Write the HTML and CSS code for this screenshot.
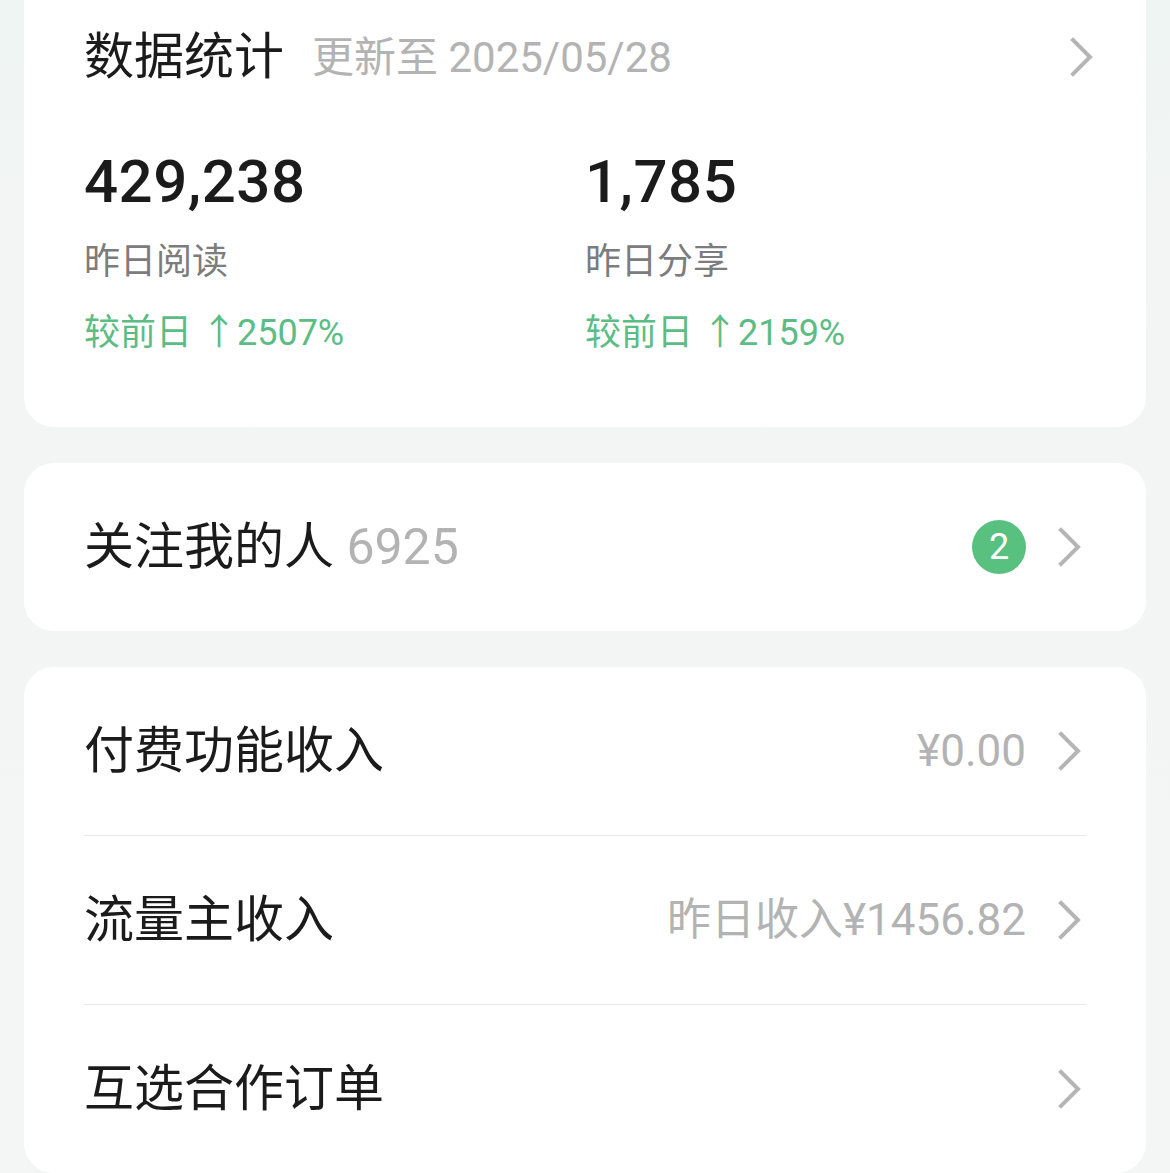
FILE: index.html
```html
<!DOCTYPE html>
<html lang="zh-CN">
<head>
<meta charset="utf-8">
<title>数据统计</title>
<link rel="stylesheet" href="styles.css">
</head>
<body>
<main class="page">
  <section class="card stats-card">
    <div class="stats-head">
      <div class="stats-title">
        <span class="title">数据统计</span>
        <span class="updated">更新至 2025/05/28</span>
      </div>
      <svg class="chev chev-head" viewBox="0 0 24 40" aria-hidden="true"><path d="M3 3 L20 20 L3 37"/></svg>
    </div>
    <div class="stats-grid">
      <div class="stat">
        <div class="stat-value">429,238</div>
        <div class="stat-label">昨日阅读</div>
        <div class="stat-delta">较前日 ↑2507%</div>
      </div>
      <div class="stat">
        <div class="stat-value">1,785</div>
        <div class="stat-label">昨日分享</div>
        <div class="stat-delta">较前日 ↑2159%</div>
      </div>
    </div>
  </section>

  <section class="card list-card">
    <div class="row">
      <div class="row-title">关注我的人 <span class="count">6925</span></div>
      <div class="row-right">
        <span class="badge">2</span>
        <svg class="chev" viewBox="0 0 24 40" aria-hidden="true"><path d="M3 3 L20 20 L3 37"/></svg>
      </div>
    </div>
  </section>

  <section class="card list-card">
    <div class="row">
      <div class="row-title">付费功能收入</div>
      <div class="row-right">
        <span class="value">¥0.00</span>
        <svg class="chev" viewBox="0 0 24 40" aria-hidden="true"><path d="M3 3 L20 20 L3 37"/></svg>
      </div>
    </div>
    <div class="row">
      <div class="row-title">流量主收入</div>
      <div class="row-right">
        <span class="value">昨日收入¥1456.82</span>
        <svg class="chev" viewBox="0 0 24 40" aria-hidden="true"><path d="M3 3 L20 20 L3 37"/></svg>
      </div>
    </div>
    <div class="row">
      <div class="row-title">互选合作订单</div>
      <div class="row-right">
        <svg class="chev" viewBox="0 0 24 40" aria-hidden="true"><path d="M3 3 L20 20 L3 37"/></svg>
      </div>
    </div>
  </section>
</main>
</body>
</html>
```

FILE: styles.css
```css
html, body {
  margin: 0;
  padding: 0;
}

body {
  background: linear-gradient(180deg, #eef5f2 0px, #f3f5f4 260px, #f4f5f5 100%);
  font-family: "Roboto", "Noto Sans CJK SC", sans-serif;
  color: #1b1b1b;
  overflow: hidden;
}

.page {
  display: flex;
  flex-direction: column;
  gap: 36px;
  padding: 0 24px;
  margin-top: -40px;
}

.card {
  background: #ffffff;
  border-radius: 30px;
  padding: 0 60px;
}

.stats-card {
  padding-top: 40px;
  padding-bottom: 69px;
}

.stats-head {
  height: 114px;
  display: flex;
  align-items: center;
  justify-content: space-between;
}

.stats-title {
  display: flex;
  align-items: center;
  gap: 28px;
}

.title {
  font-size: 50px;
  line-height: 60px;
  color: #1b1b1b;
}

.updated {
  font-size: 42px;
  line-height: 60px;
  color: #b3b3b3;
  margin-top: 2px;
}

.chev {
  width: 24px;
  height: 40px;
  fill: none;
  stroke: #b5b5b5;
  stroke-width: 4;
  stroke-linecap: square;
  stroke-linejoin: miter;
  flex: none;
}

.chev-head {
  margin-right: -8px;
}

.stats-grid {
  display: grid;
  grid-template-columns: 1fr 1fr;
  margin-top: 33px;
}

.stat {
  display: flex;
  flex-direction: column;
}

.stat-value {
  font-size: 60px;
  line-height: 70px;
  font-weight: 500;
  color: #1b1b1b;
  letter-spacing: 0.5px;
}

.stat-label {
  font-size: 36px;
  line-height: 50px;
  margin-top: 20px;
  color: #7c7c7c;
}

.stat-delta {
  font-size: 36px;
  line-height: 50px;
  margin-top: 21px;
  color: #5cbd84;
}

.row {
  height: 168px;
  display: flex;
  align-items: center;
  justify-content: space-between;
  border-top: 1px solid #e8e8e8;
}

.row:first-child {
  border-top: none;
}

.row-title {
  font-size: 50px;
  line-height: 60px;
  color: #1b1b1b;
}

.count {
  color: #b3b3b3;
}

.row-right {
  display: flex;
  align-items: center;
  gap: 32px;
  padding-right: 4px;
}

.value {
  font-size: 44px;
  line-height: 60px;
  color: #b3b3b3;
}

.badge {
  width: 54px;
  height: 54px;
  border-radius: 50%;
  background: #58c17f;
  color: #ffffff;
  font-size: 36px;
  line-height: 54px;
  text-align: center;
}
```
